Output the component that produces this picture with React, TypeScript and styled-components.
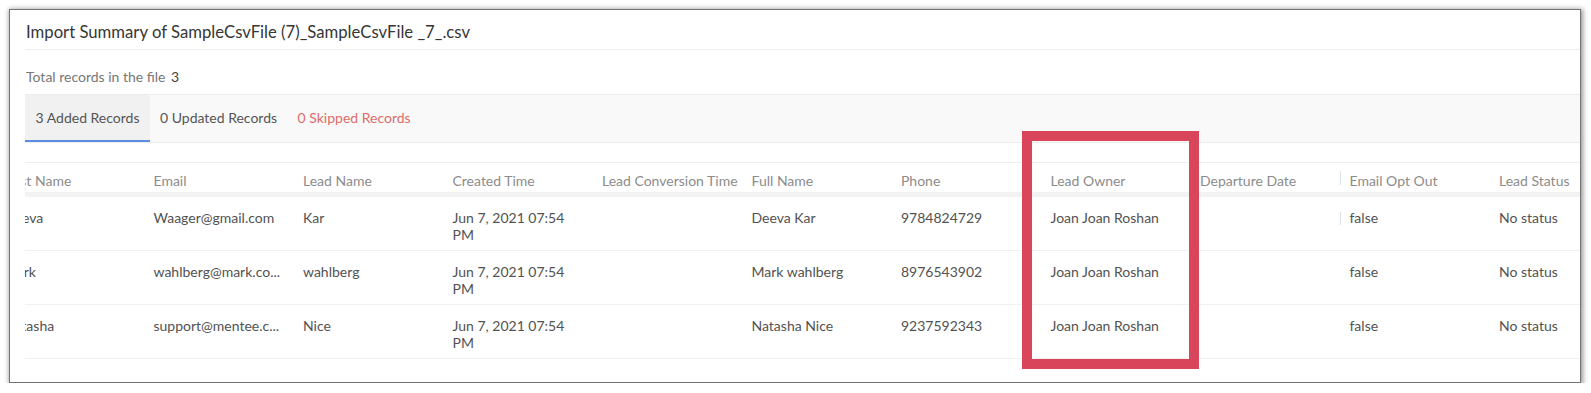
import React, { useLayoutEffect, useRef } from "react"
import styled, { createGlobalStyle } from "styled-components"

const GlobalStyle = createGlobalStyle`
  html, body {
    margin: 0;
    padding: 0;
    background: #fff;
  }
  body {
    font-family: Lato, "Open Sans", "Liberation Sans", sans-serif;
  }
`

const columns = [
  "First Name",
  "Email",
  "Lead Name",
  "Created Time",
  "Lead Conversion Time",
  "Full Name",
  "Phone",
  "Lead Owner",
  "Departure Date",
  "Email Opt Out",
  "Lead Status",
]

const rows = [
  ["Deeva", "Waager@gmail.com", "Kar", "Jun 7, 2021 07:54 PM", "", "Deeva Kar", "9784824729", "Joan Joan Roshan", "", "false", "No status"],
  ["Mark", "wahlberg@mark.co...", "wahlberg", "Jun 7, 2021 07:54 PM", "", "Mark wahlberg", "8976543902", "Joan Joan Roshan", "", "false", "No status"],
  ["Natasha", "support@mentee.c...", "Nice", "Jun 7, 2021 07:54 PM", "", "Natasha Nice", "9237592343", "Joan Joan Roshan", "", "false", "No status"],
]

const COL_W = 149.5

export default function App() {
  const scroller = useRef<HTMLDivElement>(null)

  // the grid is scrolled a little to the right in the screenshot
  useLayoutEffect(() => {
    if (scroller.current) scroller.current.scrollLeft = 30.5
  }, [])

  return (
    <>
      <GlobalStyle />
      <Frame>
        <Title>Import Summary of SampleCsvFile (7)_SampleCsvFile _7_.csv</Title>
        <Total>
          Total records in the file <Count>3</Count>
        </Total>
        <TabBar>
          <Tab $active>3 Added Records</Tab>
          <Tab>0 Updated Records</Tab>
          <Tab $danger>0 Skipped Records</Tab>
        </TabBar>
        <Scroller ref={scroller}>
          <Table>
            <colgroup>
              {columns.map((c) => (
                <col key={c} style={{ width: COL_W }} />
              ))}
            </colgroup>
            <thead>
              <tr>
                {columns.map((c) => (
                  <Th key={c} $handle={c === "Email Opt Out"}>
                    {c}
                  </Th>
                ))}
              </tr>
            </thead>
            <tbody>
              {rows.map((r, i) => (
                <tr key={i}>
                  {r.map((v, j) => (
                    <Td key={j} $handle={i === 0 && j === 9}>
                      {v}
                    </Td>
                  ))}
                </tr>
              ))}
            </tbody>
          </Table>
        </Scroller>
        <Highlight />
      </Frame>
    </>
  )
}

const Frame = styled.div`
  position: relative;
  box-sizing: border-box;
  width: 1572px;
  height: 374px;
  margin: 9px 0 0 9px;
  padding-left: 15px;
  border: 1px solid #737373;
  box-shadow: 1px 1px 5px 1px rgba(0, 0, 0, 0.42);
  background: #fff;
  overflow: hidden;
`

const Title = styled.div`
  padding: 12px 0 7px 1px;
  font-size: 16.7px;
  line-height: 20px;
  color: #363636;
  border-bottom: 1px solid #eeeeee;
`

const Total = styled.div`
  padding: 18px 0 8px 1px;
  font-size: 14px;
  line-height: 18px;
  color: #777;
`

const Count = styled.span`
  margin-left: 2px;
  color: #444;
`

const TabBar = styled.div`
  display: flex;
  background: #f9f9f9;
  border-top: 1px solid #ececec;
  border-bottom: 1px solid #ececec;
`

const Tab = styled.div<{ $active?: boolean; $danger?: boolean }>`
  padding: 0 10px 0 10.5px;
  height: 45px;
  line-height: 45px;
  font-size: 14px;
  color: ${(p) => (p.$danger ? "#dc6c6a" : "#555")};
  background: ${(p) => (p.$active ? "#f1f1f1" : "transparent")};
  border-bottom: 2px solid ${(p) => (p.$active ? "#5b8ee0" : "transparent")};
`

const Scroller = styled.div`
  margin-top: 19px;
  overflow-x: auto;
  scrollbar-width: none;
  &::-webkit-scrollbar {
    display: none;
  }
`

const Table = styled.table`
  table-layout: fixed;
  width: ${COL_W * 11}px;
  border-collapse: separate;
  border-spacing: 0;
  border-top: 1px solid #eeeeee;
`

const Th = styled.th<{ $handle?: boolean }>`
  position: relative;
  padding: 9px 20px 3px 10px;
  font-size: 14px;
  line-height: 17px;
  font-weight: normal;
  text-align: left;
  color: #8c8c8c;
  white-space: nowrap;
  border-bottom: 5px solid #f2f2f2;

  &::before {
    content: "";
    display: ${(p) => (p.$handle ? "block" : "none")};
    position: absolute;
    left: 0;
    top: 8px;
    height: 14px;
    width: 1px;
    background: #dde3ea;
  }
`

const Td = styled.td<{ $handle?: boolean }>`
  position: relative;
  padding: 12px 20px 7px 10px;
  font-size: 14px;
  line-height: 17px;
  color: #525252;
  vertical-align: top;
  border-bottom: 1px solid #f1f1f1;

  &::before {
    content: "";
    display: ${(p) => (p.$handle ? "block" : "none")};
    position: absolute;
    left: 0;
    top: 15px;
    height: 13px;
    width: 1px;
    background: #dde3ea;
  }
`

// annotation drawn over the Lead Owner column
const Highlight = styled.div`
  position: absolute;
  left: 1012px;
  top: 121px;
  width: 177px;
  height: 238px;
  box-sizing: border-box;
  border: 10px solid #d9465c;
  pointer-events: none;
`
